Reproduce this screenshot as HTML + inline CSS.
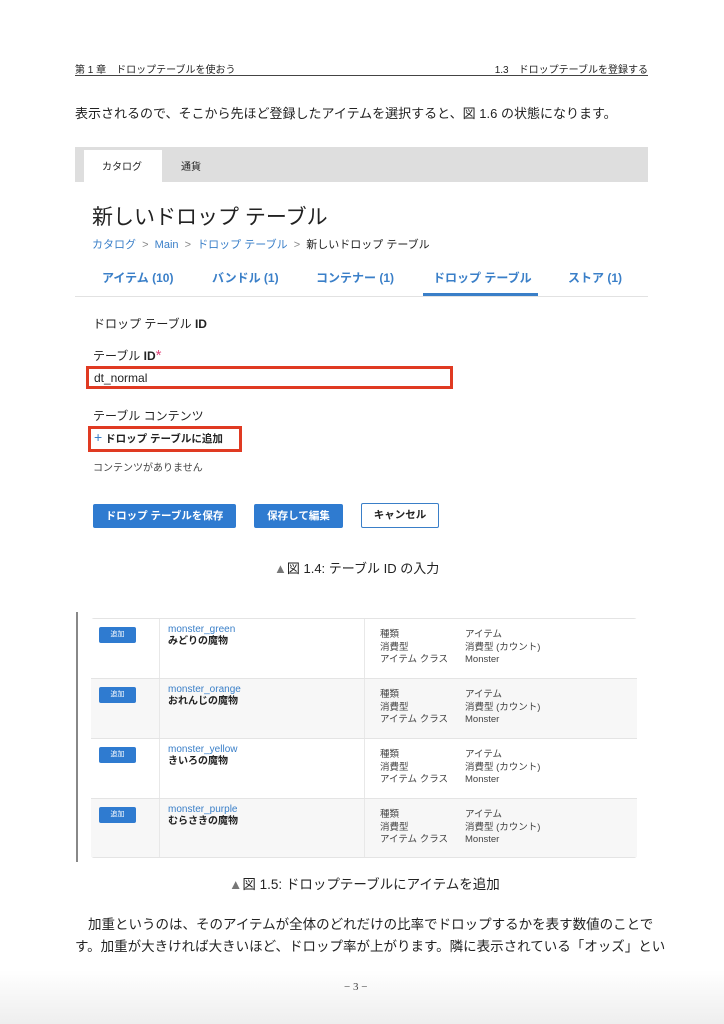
<!DOCTYPE html>
<html><head><meta charset="utf-8"><style>
*{margin:0;padding:0;box-sizing:border-box}
body{width:724px;height:1024px;position:relative;background:#fff;font-family:"Liberation Sans","Noto Sans CJK JP",sans-serif;color:#222;overflow:hidden}
.a{position:absolute;white-space:nowrap}
.blue{color:#3a7fc8}
.btn{position:absolute;background:#2f7bd0;color:#fff;font-size:10.5px;font-weight:bold;text-align:center;line-height:24px;border-radius:2px;height:24px}
.row{position:absolute;left:91px;width:546px;height:60px;border-bottom:1px solid #e4e4e4}
.row .c1{position:absolute;left:0;top:0;width:69px;height:100%;border-right:1px solid #e8e8e8}
.row .c2{position:absolute;left:69px;top:0;width:205px;height:100%;border-right:1px solid #e8e8e8}
.add{position:absolute;left:8px;top:8px;width:37px;height:16px;background:#2f7bd0;color:#fff;font-size:7px;text-align:center;line-height:16px;border-radius:2px}
.nm{position:absolute;left:8px;top:5px;font-size:10px;line-height:12px}
.nm b{color:#222;display:block}
.dt{position:absolute;left:289px;top:10px;font-size:9.5px;line-height:12.5px;color:#444}
.dt2{position:absolute;left:374px;top:10px;font-size:9.5px;line-height:12.5px;color:#444}
</style></head><body>
<div class="a" style="left:75px;top:61px;font-size:10px">第 1 章　ドロップテーブルを使おう</div>
<div class="a" style="right:76px;top:61px;font-size:10px">1.3　ドロップテーブルを登録する</div>
<div class="a" style="left:75px;top:75px;width:573px;height:1px;background:#444"></div>
<div class="a" style="left:75px;top:103px;font-size:13px">表示されるので、そこから先ほど登録したアイテムを選択すると、図 1.6 の状態になります。</div>

<div class="a" style="left:75px;top:147px;width:573px;height:35px;background:#dedede"></div>
<div class="a" style="left:84px;top:150px;width:78px;height:32px;background:#fff"></div>
<div class="a" style="left:102px;top:158px;font-size:10px">カタログ</div>
<div class="a" style="left:181px;top:158px;font-size:10px">通貨</div>
<div class="a" style="left:92px;top:201px;font-size:21px">新しいドロップ テーブル</div>
<div class="a" style="left:92px;top:236px;font-size:11px"><span class="blue">カタログ</span> <span style="color:#888">&nbsp;&gt;&nbsp;</span> <span class="blue">Main</span> <span style="color:#888">&nbsp;&gt;&nbsp;</span> <span class="blue">ドロップ テーブル</span> <span style="color:#888">&nbsp;&gt;&nbsp;</span> 新しいドロップ テーブル</div>
<div class="a blue" style="left:102px;top:269px;font-size:12px;font-weight:bold">アイテム (10)</div>
<div class="a blue" style="left:212px;top:269px;font-size:12px;font-weight:bold">バンドル (1)</div>
<div class="a blue" style="left:316px;top:269px;font-size:12px;font-weight:bold">コンテナー (1)</div>
<div class="a blue" style="left:433px;top:269px;font-size:12px;font-weight:bold">ドロップ テーブル</div>
<div class="a blue" style="left:568px;top:269px;font-size:12px;font-weight:bold">ストア (1)</div>
<div class="a" style="left:75px;top:296px;width:573px;height:1px;background:#e2e2e2"></div>
<div class="a" style="left:423px;top:293px;width:115px;height:3px;background:#3a7fc8"></div>

<div class="a" style="left:93px;top:315px;font-size:12px">ドロップ テーブル <b>ID</b></div>
<div class="a" style="left:93px;top:347px;font-size:12px">テーブル <b>ID</b><span style="color:#e0457b;font-size:15px">*</span></div>
<div class="a" style="left:86px;top:366px;width:367px;height:23px;border:3px solid #e03a22"></div>
<div class="a" style="left:94px;top:371px;font-size:12px">dt_normal</div>
<div class="a" style="left:93px;top:407px;font-size:12px">テーブル コンテンツ</div>
<div class="a" style="left:88px;top:426px;width:154px;height:26px;border:3px solid #e03a22"></div>
<div class="a" style="left:94px;top:431px;font-size:10.5px;font-weight:bold"><span class="blue" style="font-size:14px;font-weight:normal;line-height:12px">+</span> ドロップ テーブルに追加</div>
<div class="a" style="left:93px;top:459px;font-size:10px;color:#444">コンテンツがありません</div>
<div class="btn" style="left:93px;top:504px;width:143px">ドロップ テーブルを保存</div>
<div class="btn" style="left:254px;top:504px;width:89px">保存して編集</div>
<div class="a" style="left:361px;top:503px;width:78px;height:25px;border:1px solid #3a7fc8;border-radius:2px;text-align:center;line-height:23px;font-size:10.5px;font-weight:bold">キャンセル</div>
<div class="a" style="left:274px;top:558px;font-size:13px"><span style="color:#777">▲</span>図 1.4: テーブル ID の入力</div>

<div class="a" style="left:76px;top:612px;width:2px;height:250px;background:#888"></div>
<div class="a" style="left:91px;top:618px;width:546px;height:240px;border:1px solid #e4e4e4;border-radius:3px"></div>
<div class="row" style="top:619px;background:#fff"><div class="c1"><div class="add">追加</div></div><div class="c2"><div class="nm blue">monster_green<b>みどりの魔物</b></div></div><div class="dt">種類<br>消費型<br>アイテム クラス</div><div class="dt2">アイテム<br>消費型 (カウント)<br>Monster</div></div>
<div class="row" style="top:679px;background:#f7f7f7"><div class="c1"><div class="add">追加</div></div><div class="c2"><div class="nm blue">monster_orange<b>おれんじの魔物</b></div></div><div class="dt">種類<br>消費型<br>アイテム クラス</div><div class="dt2">アイテム<br>消費型 (カウント)<br>Monster</div></div>
<div class="row" style="top:739px;background:#fff"><div class="c1"><div class="add">追加</div></div><div class="c2"><div class="nm blue">monster_yellow<b>きいろの魔物</b></div></div><div class="dt">種類<br>消費型<br>アイテム クラス</div><div class="dt2">アイテム<br>消費型 (カウント)<br>Monster</div></div>
<div class="row" style="top:799px;height:58px;background:#f7f7f7;border-bottom:none"><div class="c1"><div class="add">追加</div></div><div class="c2"><div class="nm blue">monster_purple<b>むらさきの魔物</b></div></div><div class="dt">種類<br>消費型<br>アイテム クラス</div><div class="dt2">アイテム<br>消費型 (カウント)<br>Monster</div></div>
<div class="a" style="left:229px;top:873px;font-size:13.5px"><span style="color:#777">▲</span>図 1.5: ドロップテーブルにアイテムを追加</div>

<div class="a" style="left:88px;top:913px;font-size:13.5px">加重というのは、そのアイテムが全体のどれだけの比率でドロップするかを表す数値のことで</div>
<div class="a" style="left:75px;top:935px;font-size:13.5px">す。加重が大きければ大きいほど、ドロップ率が上がります。隣に表示されている「オッズ」とい</div>
<div class="a" style="left:0;top:970px;width:724px;height:54px;background:linear-gradient(#fff,#eee)"></div>
<div class="a" style="left:344px;top:981px;font-size:11px;font-family:'Liberation Serif',serif;color:#444">− 3 −</div>
</body></html>
